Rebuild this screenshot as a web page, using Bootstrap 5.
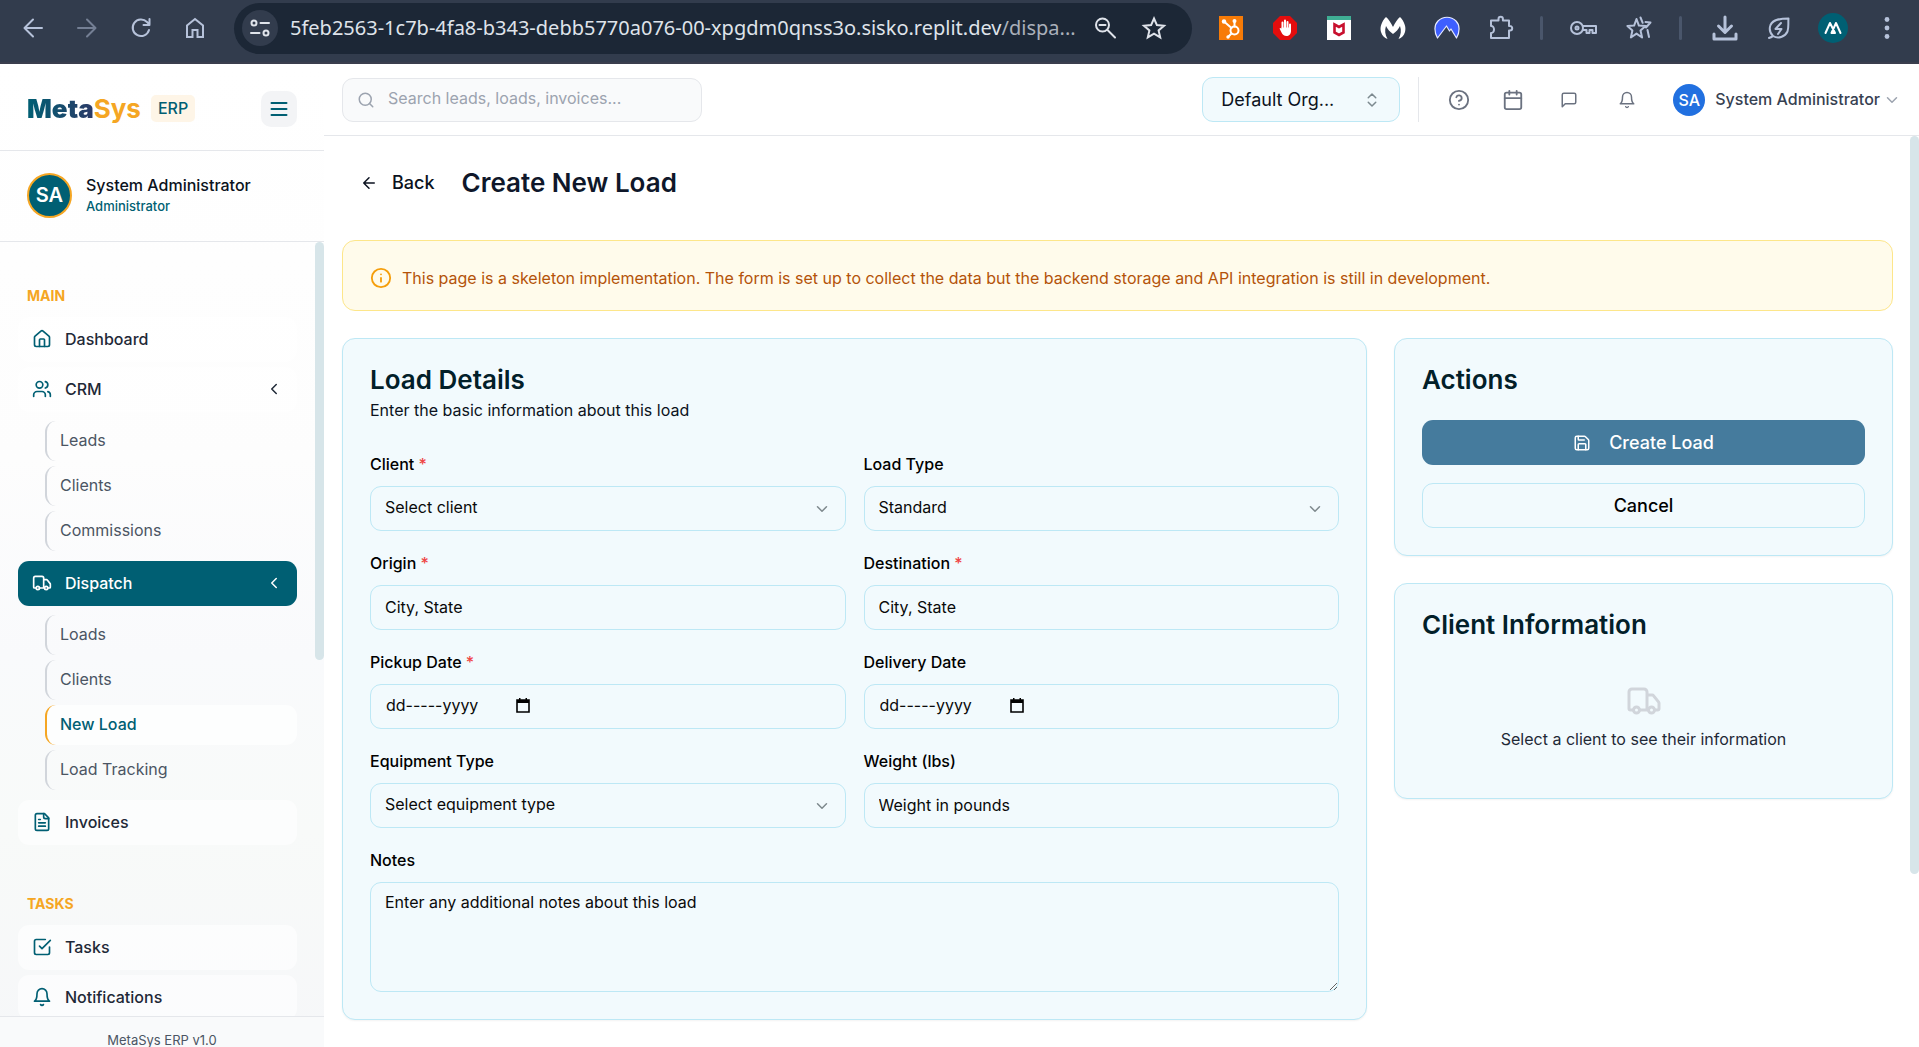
<!DOCTYPE html>
<html lang="en">
<head>
<meta charset="utf-8">
<meta name="viewport" content="width=device-width, initial-scale=1">
<title>MetaSys ERP - Create New Load</title>
<link href="https://cdn.jsdelivr.net/npm/bootstrap@5.3.0/dist/css/bootstrap.min.css" rel="stylesheet">
<style>
:root{--teal:#005f73;--amber:#f5a623;--line:#e5e7eb;--ice:#f2fafd;--ice-line:#bde8f5}
body{font-family:Inter,"Liberation Sans",sans-serif;font-size:16px;line-height:22px;color:#0b1220;background:#fff}
svg{display:block;flex:none;fill:none;stroke:currentColor;stroke-width:2;stroke-linecap:round;stroke-linejoin:round}
button,a{color:inherit;text-decoration:none}
.plain{background:none;border:0;padding:0}
.i18{width:18px;height:18px}.i20{width:20px;height:20px}.i22{width:22px;height:22px}.i28{width:28px;height:28px}
/* browser bar */
.chrome{height:64px;background:#323c4d;border-bottom:2px solid #3a3e4d;color:#b6c2da;padding:2px 5px 8px 6px}
.slot{width:54px;display:flex;align-items:center;justify-content:center}
.slot-wide{width:56px}
.faded{opacity:.5}
.heavy{stroke-width:3}
.bar-rule{width:27px;display:flex;justify-content:center}
.bar-rule::before{content:"";width:3px;height:24px;border-radius:2px;background:#4a566b}
.omni{background:#1c2736;border-radius:26px;height:51px;margin:0 12px;color:#dfe3ea;padding:0 8px}
.omni .tune{width:36px;height:36px;border-radius:50%;background:#323c4d}
.url{font-family:"Noto Sans","Open Sans",sans-serif;font-size:20px;line-height:28px;white-space:nowrap;overflow:hidden}
.url span{color:#aab0ba}
.me{width:30px;height:30px;border-radius:50%;background:var(--teal);color:#fff}
/* sidebar */
.side{width:324px;background:linear-gradient(#fff 0%,#fdfdfd 40%,#f9fafc 60%,#f8faf9 78%,#f6f7f9 100%)}
.brandrow{height:87px;padding:3px 27px 0;border-bottom:1px solid var(--line)}
.logo{font-size:26px;line-height:36px;font-weight:700;color:var(--amber)}
.logo b{background:linear-gradient(90deg,#005f73,#2b3a67);-webkit-background-clip:text;background-clip:text;color:transparent}
.erp{font-weight:500;line-height:27px;padding:0 7px;margin-left:10px;border-radius:5px;background:#fef5e7;color:var(--teal)}
.burger{width:36px;height:36px;border-radius:10px;background:#f3f4f6;color:var(--teal)}
.userrow{height:91px;padding:0 27px 2px;gap:14px;border-bottom:1px solid var(--line)}
.ava{width:45px;height:45px;border-radius:50%;border:2px solid var(--amber);background:var(--teal);color:#fff;font-size:20px;font-weight:600}
.who{font-weight:500}
.role{font-size:13px;line-height:20px;color:var(--teal);font-weight:500}
.tree{padding:42px 27px 0 18px}
.sect{font-size:14px;line-height:24px;font-weight:700;color:var(--amber);padding-left:9px;margin-bottom:9px}
.sect-next{margin-top:47px}
.entry{height:45px;border-radius:11px;padding:0 14px 2px;gap:13px;margin-bottom:5px;background:rgba(255,255,255,.6);color:#1f2937;font-weight:500}
.entry svg{color:var(--teal)}
.entry .turn{color:#1f2937}
.entry.on,.entry.on svg{background:var(--teal);color:#fff}
.subs{margin:9px 0 10px 27px;display:flex;flex-direction:column;gap:5px}
.subs a{height:40px;line-height:38px;border-left:2px solid #d1d5db;border-radius:11px;padding-left:13px;color:#4b5563}
.subs a.on{border-color:var(--amber);background:rgba(255,255,255,.7);color:var(--teal);font-weight:500}
.foot{height:31px;border-top:1px solid var(--line);padding-top:13px;font-size:13px;line-height:20px;color:#4b5563;background:#f9fafb}
.thumb{position:absolute;right:0;width:9px;border-radius:5px;background:#d7e5e9}
.thumb-side{top:0;height:54%}
.thumb-main{top:0;height:81%}
/* top bar */
.top{height:72px;border-bottom:1px solid var(--line);padding:0 18px}
.find{width:360px;height:44px;border:1px solid var(--line);border-radius:11px;background:#f9fafb;padding:0 14px;gap:13px;color:#9ca3af}
.find input{border:0;background:none;outline:0;padding:0 0 3px;color:#6b7280}
.find input::placeholder{color:#9ca3af}
.org{width:198px;height:45px;border:1px solid var(--ice-line);border-radius:11px;background:var(--ice);padding:0 18px;font-size:18px;color:#0b1220}
.org svg{color:#7d8a90}
.split{width:1px;height:45px;background:var(--line);margin:0 17px 0 18px}
.tool{width:45px;height:45px;color:#6b7280;display:flex;align-items:center;justify-content:center;margin-right:9px}
.tool-wide{width:49px}
.acct{font-weight:500;color:#374151;padding-bottom:2px;margin:0 3px 0 10px}
.dim{color:#9ca3af}
.ava-sm{width:32px;height:32px;border-radius:50%;background:#2170e0;color:#fff;font-weight:500;margin-left:5px}
/* page */
.page{padding:27px 26px 0 18px}
.back{font-size:18px;font-weight:500;gap:14px;margin:0 27px 0 18px}
h1,h2{font-size:26px;line-height:27px;font-weight:600;margin:0}
h1{line-height:40px;color:#0f172a}
h2{color:#022029}
.note{margin-top:37px;height:71px;border:1px solid #fde68a;border-radius:13px;background:#fffbeb;color:#b45309;padding:5px 27px 0;gap:10px;margin-bottom:27px}
.note svg{color:#f59e0b}
.cols{display:grid;grid-template-columns:repeat(3,1fr);gap:27px;align-items:start}
.span-two{grid-column:span 2}
.stack{gap:27px}
.panel{border:1px solid var(--ice-line);border-radius:13px;background:var(--ice);padding:27px;box-shadow:0 1px 2px rgba(0,0,0,.05)}
.sub{margin:6px 0 32px}
.fields{display:grid;grid-template-columns:1fr 1fr;gap:21px 18px}
.fields label{display:block;margin-bottom:11px;font-weight:500;color:#000}
.fields i{font-style:normal;color:#ef4444}
.fields .form-control,.fields .form-select{height:45px;border:1px solid var(--ice-line);border-radius:11px;background-color:var(--ice);padding:0 14px 2px;font-size:16px;line-height:22px;color:#0a0a0a}
.fields .form-select{padding-bottom:4px;background-image:url("data:image/svg+xml,%3Csvg xmlns='http://www.w3.org/2000/svg' viewBox='0 0 24 24' fill='none' stroke='%237f8a8e' stroke-width='2' stroke-linecap='round' stroke-linejoin='round'%3E%3Cpath d='m6 9 6 6 6-6'/%3E%3C/svg%3E");background-size:18px;background-position:right 14px center}
.fields .form-control::placeholder,.datebox input::placeholder{color:#0a0a0a;opacity:1}
.fields textarea.form-control{height:110px;padding:8px 14px}
.datebox input{width:131px;border:0;background:none;outline:0;padding:0 1px 1px}
.wide{grid-column:1/-1}
.act{height:45px;border-radius:11px;font-size:18px;font-weight:500}
.act-main{background:#457b9d;color:#fff;gap:18px;margin:27px 0 18px}
.act-alt{border:1px solid var(--ice-line);color:#000}
.empty{padding:45px 0 21px;gap:9px;color:#1f2937}
.empty svg{width:36px;height:36px;color:#d1d5db}
</style>
<script src="https://cdn.jsdelivr.net/npm/bootstrap@5.3.0/dist/js/bootstrap.bundle.min.js"></script>
</head>
<body class="vh-100 overflow-hidden d-flex flex-column">
<svg class="d-none">
<symbol id="left" viewBox="0 0 24 24"><path d="m12 19-7-7 7-7M19 12H5"/></symbol>
<symbol id="truck" viewBox="0 0 24 24"><path d="M14 18V6a2 2 0 0 0-2-2H4a2 2 0 0 0-2 2v11a1 1 0 0 0 1 1h2M15 18H9M19 18h2a1 1 0 0 0 1-1v-3.650a1 1 0 0 0-.22-.624l-3.480-4.350A1 1 0 0 0 17.520 8H14"/><circle cx="17" cy="18" r="2"/><circle cx="7" cy="18" r="2"/></symbol>
<symbol id="bell" viewBox="0 0 24 24"><path d="M6 8a6 6 0 0 1 12 0c0 7 3 9 3 9H3s3-2 3-9M10.300 21a1.940 1.940 0 0 0 3.400 0"/></symbol>
<symbol id="chev-l" viewBox="0 0 24 24"><path d="m15 18-6-6 6-6"/></symbol>
<symbol id="cal" viewBox="0 0 14 15"><path d="M1 2h12v12H1z" stroke="#000" stroke-width="1.600" stroke-linejoin="miter"/><path d="M1 2h12v3H1zM3 0h1.500v2H3zM9.500 0H11v2H9.500z" fill="#000" stroke="none"/></symbol>
</svg>

<header class="chrome d-flex align-items-center flex-shrink-0">
  <button class="plain slot" aria-label="Back"><svg class="i28" viewBox="0 0 28 28"><path d="M23 14H6M14 5.500 5.500 14l8.500 8.500"/></svg></button>
  <button class="plain slot faded" aria-label="Forward"><svg class="i28" viewBox="0 0 28 28"><path d="M5 14h17M14 5.500 22.500 14 14 22.500"/></svg></button>
  <button class="plain slot" aria-label="Reload"><svg class="i28" viewBox="0 0 28 28"><path d="M22 16a8.300 8.300 0 1 1-2-8l2.500 2.500M22.500 5v6h-6"/></svg></button>
  <button class="plain slot" aria-label="Home"><svg class="i28" viewBox="0 0 28 28"><path d="M6 11.500 14 5l8 6.500V23h-5.500v-7h-5v7H6z" stroke-linejoin="miter"/></svg></button>
  <div class="omni d-flex align-items-center flex-grow-1">
    <span class="tune d-flex align-items-center justify-content-center me-2"><svg class="i22" viewBox="0 0 22 22"><circle cx="5" cy="6" r="2.500"/><path d="M11.500 6H20M2 16h8.500"/><circle cx="17" cy="16" r="2.500"/></svg></span>
    <div class="url ms-1 flex-grow-1">5feb2563-1c7b-4fa8-b343-debb5770a076-00-xpgdm0qnss3o.sisko.replit.dev<span>/dispa...</span></div>
    <button class="plain me-4" aria-label="Zoom"><svg class="i22" viewBox="0 0 22 22"><circle cx="8.500" cy="8" r="6.500"/><path d="M13.500 13 21 20.500M5.500 8h6"/></svg></button>
    <button class="plain me-3" aria-label="Bookmark"><svg class="i28" viewBox="0 0 28 28"><path d="m14 4.500 2.900 6.600 7.100.6-5.400 4.700 1.600 7L14 19.600l-6.200 3.800 1.600-7L4 11.700l7.100-.6z" stroke-linejoin="miter"/></svg></button>
  </div>
  <span class="slot"><svg class="i28" viewBox="0 0 28 28"><path d="M2 2h24v24H2z" fill="#f77b07" stroke="none"/><g stroke="#fff"><circle cx="17.500" cy="16.500" r="4"/><path d="M17.500 12.500V7M14.500 14 7 7.500M14.500 19.500 11 23"/></g><g fill="#fff" stroke="none"><circle cx="17.500" cy="7" r="2"/><circle cx="7" cy="7.500" r="2.200"/><circle cx="11" cy="23" r="1.700"/></g></svg></span>
  <span class="slot"><svg class="i28" viewBox="0 0 28 28"><path d="M9 2h10l7 7v10l-7 7H9l-7-7V9z" fill="#e40d0d" stroke="none"/><path d="M11.500 14V8.500M14 14V6.500M16.500 14V8M19 15v-4.500" stroke="#fff"/><path d="M10.500 13.500h9.500v3.500c0 3-2 5-4.500 5s-4-1.500-5-3.500l-2-4c.8-.9 1.500-.7 2 .2z" fill="#fff" stroke="none"/></svg></span>
  <span class="slot"><svg class="i28" viewBox="0 0 28 28"><path d="M2 2h24v24H2z" fill="#fff" stroke="none"/><path d="M2 2h24v4H2z" fill="#3fae94" stroke="none"/><path d="M9.500 10.500 14 13l4.500-2.500v8L14 21l-4.500-2.500z" stroke="#c8102e" stroke-width="2.600" stroke-linejoin="miter"/></svg></span>
  <span class="slot"><svg class="i28" viewBox="0 0 28 28"><path d="M7 3c2.500 2 5 6 7 10 2-4 4.500-8 7-10 4 4 6.500 10 5 15-1 3.500-3.500 6-6.500 7 2.500-4 3-9 1.500-13-1.500 3-4 6-7 8-3-2-5.500-5-7-8-1.500 4-1 9 1.500 13-3-1-5.500-3.500-6.500-7C.500 13 3 7 7 3z" fill="#fff" stroke="none"/></svg></span>
  <span class="slot"><svg class="i28" viewBox="0 0 28 28"><path d="M4.500 24C1 18 1 11 5 7c5-5 13-5 18 0 4 4 4 11 .5 17L18 15l-1.500 2L13.500 12z" fill="#3e5fff" stroke="#e6eaff" stroke-width="1.200"/></svg></span>
  <span class="slot"><svg class="i28" viewBox="0 0 28 28"><path d="M4 6.500h7.500V5a2.200 2.200 0 0 1 4.400 0v1.500H22V12h1a2.200 2.200 0 0 1 0 4.400h-1V24H4v-5c4 .3 4-7.300 0-7z"/></svg></span>
  <span class="bar-rule"></span>
  <span class="slot slot-wide"><svg class="i28" viewBox="0 0 28 28"><circle cx="8" cy="14" r="6"/><circle cx="8" cy="14" r="1.500"/><path d="M14 12h13v7h-3.500v-3h-3v3h-3v-3H14"/></svg></span>
  <span class="slot slot-wide"><svg class="i28" viewBox="0 0 28 28"><path d="m11.500 5 2.400 6.600 6.600.4-5 4.500 1.600 7-5.600-3.900-5.600 3.900 1.500-7-5-4.500 6.700-.4zM15.500 3.500l2.200 5.300M20.500 8l5 .5-4.500 5M22.500 16l1.500 7"/></svg></span>
  <span class="bar-rule me-1"></span>
  <span class="slot"><svg class="i28 heavy" viewBox="0 0 28 28"><path d="M14 3v15M7.500 12 14 18.500l6.500-6.500M3 20v5h22v-5"/></svg></span>
  <span class="slot"><svg class="i28" viewBox="0 0 28 28"><path d="M4 24c3-1 3-1 4-2 5 3 12 1 14.500-4.500C24 13 23 8 23.500 4.500 16 4.500 8 5 5.500 11 4 15 5 19 8 22M16 9l-5.500 6h6L13 20"/></svg></span>
  <span class="slot"><span class="me d-flex align-items-center justify-content-center"><svg class="i18" viewBox="0 0 18 18"><path d="m1.500 14 4.500-10 5 10H8M16.500 14 12 4 7.500 14"/></svg></span></span>
  <button class="plain slot" aria-label="Menu"><svg class="i28" viewBox="0 0 28 28"><g fill="currentColor" stroke="none"><circle cx="14" cy="5.500" r="2.400"/><circle cx="14" cy="14" r="2.400"/><circle cx="14" cy="22.500" r="2.400"/></g></svg></button>
</header>

<div class="d-flex flex-grow-1 overflow-hidden">
  <aside class="side d-flex flex-column flex-shrink-0">
    <div class="brandrow d-flex align-items-center flex-shrink-0">
      <span class="logo"><b>Meta</b>Sys</span><span class="erp">ERP</span>
      <button class="plain burger ms-auto d-flex align-items-center justify-content-center" aria-label="Toggle menu"><svg class="i20" viewBox="0 0 20 20"><path d="M2.500 4h15M2.500 10h15M2.500 16h15"/></svg></button>
    </div>
    <div class="userrow d-flex align-items-center flex-shrink-0">
      <span class="ava d-flex align-items-center justify-content-center">SA</span>
      <div><div class="who">System Administrator</div><div class="role">Administrator</div></div>
    </div>
    <div class="position-relative flex-grow-1 overflow-hidden">
      <nav class="tree">
        <div class="sect">MAIN</div>
        <a href="#" class="entry d-flex align-items-center"><svg class="i20" viewBox="0 0 24 24"><path d="M15 21v-8a1 1 0 0 0-1-1h-4a1 1 0 0 0-1 1v8"/><path d="M3 10a2 2 0 0 1 .7-1.500l7-6a2 2 0 0 1 2.600 0l7 6A2 2 0 0 1 21 10v9a2 2 0 0 1-2 2H5a2 2 0 0 1-2-2z"/></svg>Dashboard</a>
        <a href="#" class="entry d-flex align-items-center"><svg class="i20" viewBox="0 0 24 24"><path d="M16 21v-2a4 4 0 0 0-4-4H6a4 4 0 0 0-4 4v2"/><circle cx="9" cy="7" r="4"/><path d="M22 21v-2a4 4 0 0 0-3-3.870M16 3.130a4 4 0 0 1 0 7.750"/></svg>CRM<svg class="i18 turn ms-auto"><use href="#chev-l"/></svg></a>
        <div class="subs"><a href="#">Leads</a><a href="#">Clients</a><a href="#">Commissions</a></div>
        <a href="#" class="entry on d-flex align-items-center"><svg class="i20"><use href="#truck"/></svg>Dispatch<svg class="i18 turn ms-auto"><use href="#chev-l"/></svg></a>
        <div class="subs"><a href="#">Loads</a><a href="#">Clients</a><a href="#" class="on">New Load</a><a href="#">Load Tracking</a></div>
        <a href="#" class="entry d-flex align-items-center"><svg class="i20" viewBox="0 0 24 24"><path d="M15 2H6a2 2 0 0 0-2 2v16a2 2 0 0 0 2 2h12a2 2 0 0 0 2-2V7z"/><path d="M14 2v4a2 2 0 0 0 2 2h4M10 9H8M16 13H8M16 17H8"/></svg>Invoices</a>
        <div class="sect sect-next">TASKS</div>
        <a href="#" class="entry d-flex align-items-center"><svg class="i20" viewBox="0 0 24 24"><path d="m9 11 3 3L22 4"/><path d="M21 12v7a2 2 0 0 1-2 2H5a2 2 0 0 1-2-2V5a2 2 0 0 1 2-2h11"/></svg>Tasks</a>
        <a href="#" class="entry d-flex align-items-center"><svg class="i20"><use href="#bell"/></svg>Notifications</a>
      </nav>
      <span class="thumb thumb-side"></span>
    </div>
    <div class="foot text-center flex-shrink-0">MetaSys ERP v1.0</div>
  </aside>

  <div class="flex-grow-1 d-flex flex-column">
    <div class="top d-flex align-items-center flex-shrink-0">
      <div class="find d-flex align-items-center"><svg class="i18" viewBox="0 0 24 24"><circle cx="11" cy="11" r="8"/><path d="m21 21-4.300-4.300"/></svg><input type="search" class="flex-grow-1" placeholder="Search leads, loads, invoices..." aria-label="Search"></div>
      <button class="org ms-auto d-flex align-items-center justify-content-between">Default Org...<svg class="i18" viewBox="0 0 24 24"><path d="m7 15 5 5 5-5M7 9l5-5 5 5"/></svg></button>
      <span class="split"></span>
      <button class="plain tool" aria-label="Help"><svg class="i22" viewBox="0 0 24 24"><circle cx="12" cy="12" r="10"/><path d="M9.090 9a3 3 0 0 1 5.830 1c0 2-3 3-3 3M12 17h.01"/></svg></button>
      <button class="plain tool" aria-label="Calendar"><svg class="i22" viewBox="0 0 24 24"><path d="M8 2v4M16 2v4M3 10h18"/><rect x="3" y="4" width="18" height="18" rx="2"/></svg></button>
      <button class="plain tool tool-wide" aria-label="Messages"><svg class="i18" viewBox="0 0 24 24"><path d="M21 15a2 2 0 0 1-2 2H7l-4 4V5a2 2 0 0 1 2-2h14a2 2 0 0 1 2 2z"/></svg></button>
      <button class="plain tool tool-wide" aria-label="Notifications"><svg class="i18"><use href="#bell"/></svg></button>
      <button class="plain d-flex align-items-center ms-2"><span class="ava-sm d-flex align-items-center justify-content-center">SA</span><span class="acct">System Administrator</span><svg class="i18 dim" viewBox="0 0 24 24"><path d="m6 9 6 6 6-6"/></svg></button>
    </div>
    <main class="position-relative flex-grow-1 overflow-hidden">
      <div class="page">
        <div class="d-flex align-items-center">
          <button class="plain back d-flex align-items-center"><svg class="i18"><use href="#left"/></svg>Back</button>
          <h1>Create New Load</h1>
        </div>
        <div class="note d-flex align-items-center"><svg class="i22" viewBox="0 0 24 24"><circle cx="12" cy="12" r="10"/><path d="M12 16v-4M12 8h.01"/></svg><span>This page is a skeleton implementation. The form is set up to collect the data but the backend storage and API integration is still in development.</span></div>
        <div class="cols">
          <section class="panel span-two">
            <h2>Load Details</h2>
            <p class="sub">Enter the basic information about this load</p>
            <form class="fields">
              <div><label for="client">Client <i>*</i></label><select id="client" class="form-select"><option>Select client</option></select></div>
              <div><label for="ltype">Load Type</label><select id="ltype" class="form-select"><option>Standard</option></select></div>
              <div><label for="origin">Origin <i>*</i></label><input id="origin" class="form-control" placeholder="City, State"></div>
              <div><label for="dest">Destination <i>*</i></label><input id="dest" class="form-control" placeholder="City, State"></div>
              <div><label for="pickup">Pickup Date <i>*</i></label><div class="form-control datebox d-flex align-items-center"><input id="pickup" placeholder="dd-----yyyy"><button type="button" class="plain" aria-label="Pick date"><svg width="14" height="15"><use href="#cal"/></svg></button></div></div>
              <div><label for="deliv">Delivery Date</label><div class="form-control datebox d-flex align-items-center"><input id="deliv" placeholder="dd-----yyyy"><button type="button" class="plain" aria-label="Pick date"><svg width="14" height="15"><use href="#cal"/></svg></button></div></div>
              <div><label for="equip">Equipment Type</label><select id="equip" class="form-select"><option>Select equipment type</option></select></div>
              <div><label for="weight">Weight (lbs)</label><input id="weight" class="form-control" placeholder="Weight in pounds"></div>
              <div class="wide"><label for="notes">Notes</label><textarea id="notes" class="form-control" placeholder="Enter any additional notes about this load"></textarea></div>
            </form>
          </section>
          <div class="d-grid stack">
            <section class="panel">
              <h2>Actions</h2>
              <button class="plain act act-main w-100 d-flex align-items-center justify-content-center"><svg class="i18" viewBox="0 0 24 24"><path d="M15.200 3a2 2 0 0 1 1.400.6l3.800 3.800a2 2 0 0 1 .6 1.400V19a2 2 0 0 1-2 2H5a2 2 0 0 1-2-2V5a2 2 0 0 1 2-2z"/><path d="M17 21v-7a1 1 0 0 0-1-1H8a1 1 0 0 0-1 1v7M7 3v4a1 1 0 0 0 1 1h7"/></svg>Create Load</button>
              <button class="btn act act-alt w-100 p-0">Cancel</button>
            </section>
            <section class="panel">
              <h2>Client Information</h2>
              <div class="empty d-flex flex-column align-items-center"><svg><use href="#truck"/></svg><span>Select a client to see their information</span></div>
            </section>
          </div>
        </div>
      </div>
      <span class="thumb thumb-main"></span>
    </main>
  </div>
</div>
</body>
</html>
